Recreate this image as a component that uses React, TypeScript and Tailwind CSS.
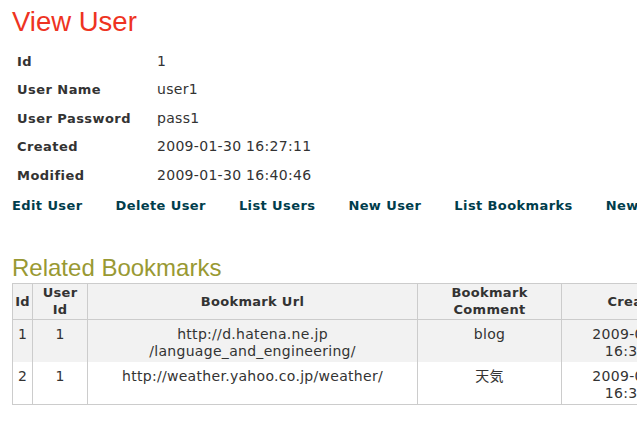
import React from 'react';

interface Bookmark {
  id: number;
  userId: number;
  url: string[];
  comment: string;
  created: string;
  modified: string;
}

const fields: [string, string][] = [
  ['Id', '1'],
  ['User Name', 'user1'],
  ['User Password', 'pass1'],
  ['Created', '2009-01-30 16:27:11'],
  ['Modified', '2009-01-30 16:40:46'],
];

const actions = ['Edit User', 'Delete User', 'List Users', 'New User', 'List Bookmarks', 'New Bookmark'];

const bookmarks: Bookmark[] = [
  {
    id: 1,
    userId: 1,
    url: ['http://d.hatena.ne.jp', '/language_and_engineering/'],
    comment: 'blog',
    created: '16:35:02',
    modified: '16:35:02',
  },
  {
    id: 2,
    userId: 1,
    url: ['http://weather.yahoo.co.jp/weather/'],
    comment: '天気',
    created: '16:36:21',
    modified: '16:36:21',
  },
];

// plain (non-bold) cell text runs a bit wider in the original
const cell = 'border-x border-[#ccc] pt-[6px] pb-[2px] text-center align-top leading-[17px] text-[14px] tracking-[0.3px]';

export default function App() {
  return (
    <div className="w-[637px] h-[424px] overflow-hidden bg-white text-[13px] text-[#333] font-['DejaVu_Sans','Noto_Sans_CJK_JP',sans-serif]">
      <div className="pl-[12px]">
        <h2 className="pt-[7px] text-[27.5px] leading-[30px] text-[#e32] font-['Liberation_Sans',Arial,sans-serif]">
          View User
        </h2>

        <dl className="mt-[10px] pl-[5px]">
          {fields.map(([label, value]) => (
            <div key={label} className="flex h-[28.5px] items-center">
              <dt className="w-[140px] font-bold tracking-[0.45px]">{label}</dt>
              <dd className="text-[14px] tracking-[0.3px]">{value}</dd>
            </div>
          ))}
        </dl>

        <ul className="flex h-[31px] items-center gap-[33px] whitespace-nowrap pt-[1px]">
          {actions.map((a) => (
            <li key={a}>
              <a href="#" className="font-bold tracking-[0.4px] text-[#003d4c]">
                {a}
              </a>
            </li>
          ))}
        </ul>

        <h3 className="mt-[33px] text-[24px] leading-[27px] text-[#993] font-['Liberation_Sans',Arial,sans-serif]">
          Related Bookmarks
        </h3>

        <table className="mt-[2px] table-fixed border-collapse border border-[#ccc] w-[900px]">
          <colgroup>
            <col className="w-[20px]" />
            <col className="w-[55px]" />
            <col className="w-[330px]" />
            <col className="w-[144px]" />
            <col className="w-[152px]" />
            <col className="w-[152px]" />
            <col className="w-[47px]" />
          </colgroup>
          <thead>
            <tr className="bg-[#f2f2f2]">
              {['Id', 'User Id', 'Bookmark Url', 'Bookmark Comment', 'Created', 'Modified', ''].map((h) => (
                <th
                  key={h}
                  className="border border-[#ccc] px-0 py-[0.5px] text-center align-middle font-bold leading-[17px] tracking-[0.3px]"
                >
                  {h.split(' ').map((w, i) => (
                    <React.Fragment key={i}>
                      {i > 0 && (h === 'User Id' || h === 'Bookmark Comment' ? <br /> : ' ')}
                      {w}
                    </React.Fragment>
                  ))}
                </th>
              ))}
            </tr>
          </thead>
          <tbody>
            {bookmarks.map((b, i) => (
              <tr key={b.id} className={i % 2 === 0 ? 'bg-[#f2f2f2]' : 'bg-white'}>
                <td className={cell}>{b.id}</td>
                <td className={cell}>{b.userId}</td>
                <td className={cell}>
                  {b.url.map((u) => (
                    <div key={u}>{u}</div>
                  ))}
                </td>
                <td className={cell}>{b.comment}</td>
                <td className={cell}>
                  <div className="pr-[6px]">2009-01-30</div>
                  <div>{b.created}</div>
                </td>
                <td className={cell}>
                  <div className="pr-[6px]">2009-01-30</div>
                  <div>{b.modified}</div>
                </td>
                <td className={cell}></td>
              </tr>
            ))}
          </tbody>
        </table>
      </div>
    </div>
  );
}
